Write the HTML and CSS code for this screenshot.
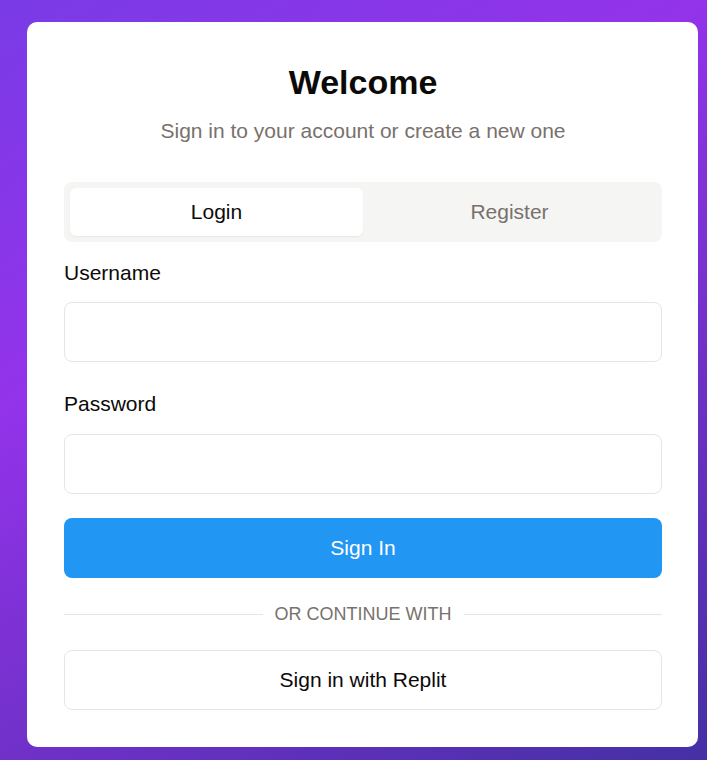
FILE: index.html
```html
<!DOCTYPE html>
<html>
<head>
<meta charset="utf-8">
<link rel="stylesheet" href="styles.css">
</head>
<body>
<div class="card">
  <h1 class="title">Welcome</h1>
  <p class="subtitle">Sign in to your account or create a new one</p>
  <div class="tabs">
    <div class="tab active">Login</div>
    <div class="tab">Register</div>
  </div>
  <form class="form">
    <label class="label">Username</label>
    <div class="input"></div>
    <label class="label pw">Password</label>
    <div class="input"></div>
    <div class="btn primary">Sign In</div>
    <div class="divider"><span class="line"></span><span class="dtext">OR CONTINUE WITH</span><span class="line"></span></div>
    <div class="btn outline">Sign in with Replit</div>
  </form>
</div>
</body>
</html>
```
FILE: styles.css
```css
html, body { margin: 0; padding: 0; }
body {
  width: 707px;
  height: 760px;
  overflow: hidden;
  background: linear-gradient(150deg, #7a3be6 0%, #9333ea 35%, #7431cc 62%, #4530a5 100%);
  font-family: "Liberation Sans", Arial, sans-serif;
  padding: 22px 9px 0 27px;
  box-sizing: border-box;
}
.card {
  background: #fff;
  border-radius: 10px;
  padding: 37px 36px 37px 37px;
  box-sizing: border-box;
  width: 671px;
  display: flex;
  flex-direction: column;
}
.title {
  margin: 0;
  font-size: 34px;
  line-height: 46px;
  font-weight: 700;
  text-align: center;
  color: #0c0a09;
}
.subtitle {
  margin: 12px 0 0;
  font-size: 21px;
  line-height: 28px;
  text-align: center;
  color: #78716c;
}
.tabs {
  margin-top: 37px;
  background: #f5f5f4;
  border-radius: 8px;
  padding: 6px;
  display: grid;
  grid-template-columns: 1fr 1fr;
}
.tab {
  height: 48px;
  display: flex;
  align-items: center;
  justify-content: center;
  font-size: 21px;
  color: #78716c;
  border-radius: 6px;
}
.tab.active {
  background: #fff;
  color: #0c0a09;
  box-shadow: 0 1px 2px rgba(0,0,0,0.06);
}
.form {
  display: flex;
  flex-direction: column;
  margin-top: 17px;
}
.label {
  font-size: 21px;
  line-height: 28px;
  color: #0c0a09;
}
.label.pw { margin-top: 28px; }
.input {
  margin-top: 15px;
  height: 60px;
  border: 1px solid #e5e5e5;
  border-radius: 8px;
  box-sizing: border-box;
}
.label.pw + .input { margin-top: 16px; }
.btn {
  height: 60px;
  border-radius: 8px;
  box-sizing: border-box;
  display: flex;
  align-items: center;
  justify-content: center;
  font-size: 21px;
}
.btn.primary {
  margin-top: 24px;
  background: #2196f3;
  color: #fff;
}
.btn.outline {
  margin-top: 24px;
  border: 1px solid #e5e5e5;
  color: #0c0a09;
  background: #fff;
}
.divider {
  margin-top: 24px;
  display: flex;
  align-items: center;
  gap: 12px;
  height: 24px;
}
.line { flex: 1; height: 1px; background: #e5e5e5; }
.dtext {
  font-size: 18px;
  color: #78716c;
  line-height: 24px;
}
```
